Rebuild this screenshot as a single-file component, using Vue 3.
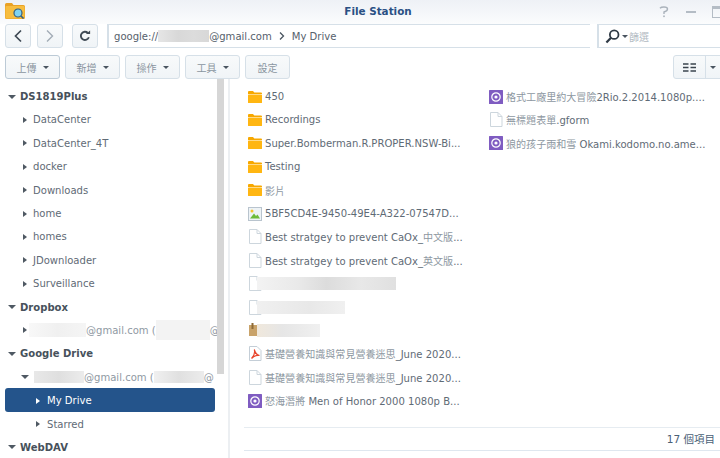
<script setup>
const tree = [
  { label: 'DS1819Plus', kind: 'head' },
  { label: 'DataCenter', kind: 'sub' },
  { label: 'DataCenter_4T', kind: 'sub' },
  { label: 'docker', kind: 'sub' },
  { label: 'Downloads', kind: 'sub' },
  { label: 'home', kind: 'sub' },
  { label: 'homes', kind: 'sub' },
  { label: 'JDownloader', kind: 'sub' },
  { label: 'Surveillance', kind: 'sub' },
  { label: 'Dropbox', kind: 'head' },
  { kind: 'acct', open: false },
  { label: 'Google Drive', kind: 'head' },
  { kind: 'acct', open: true },
  { label: 'My Drive', kind: 'drive', active: true },
  { label: 'Starred', kind: 'drive' },
  { label: 'WebDAV', kind: 'head' }
]
const col1 = [
  { icon: 'folder', name: '450' },
  { icon: 'folder', name: 'Recordings' },
  { icon: 'folder', name: 'Super.Bomberman.R.PROPER.NSW-Bi...' },
  { icon: 'folder', name: 'Testing' },
  { icon: 'folder', name: '影片' },
  { icon: 'image', name: '5BF5CD4E-9450-49E4-A322-07547D...' },
  { icon: 'file', name: 'Best stratgey to prevent CaOx_中文版...' },
  { icon: 'file', name: 'Best stratgey to prevent CaOx_英文版...' },
  { icon: 'file', blur: 'long' },
  { icon: 'file', blur: 'mid' },
  { icon: 'box', blur: 'short' },
  { icon: 'pdf', name: '基礎營養知識與常見營養迷思_June 2020...' },
  { icon: 'file', name: '基礎營養知識與常見營養迷思_June 2020...' },
  { icon: 'video', name: '怒海潛將 Men of Honor 2000 1080p B...' }
]
const col2 = [
  { icon: 'video', name: '格式工廠里約大冒險2Rio.2.2014.1080p....' },
  { icon: 'file', name: '無標題表單.gform' },
  { icon: 'video', name: '狼的孩子雨和雪 Okami.kodomo.no.ame...' }
]
const columns = [col1, col2]
const actions = ['上傳', '新增', '操作', '工具']
const parts = (s) => s.split(/([\u4e00-\u9fff]+)/).filter(Boolean).map((t) => ({ t, cjk: /[\u4e00-\u9fff]/.test(t) }))
</script>

<template>
  <div class="app">
    <header class="titlebar">
      <svg class="logo" viewBox="0 0 20 17" width="20" height="17">
        <path d="M0 2.5 Q0 1 1.5 1 H7 L8.5 3 H18.5 Q20 3 20 4.5 V15.5 Q20 17 18.5 17 H1.5 Q0 17 0 15.5 Z" fill="#e9a227" />
        <rect x="0.5" y="4" width="19" height="12.5" rx="1" fill="#f7bd3f" />
        <circle cx="13" cy="11" r="4" fill="#7fd3f2" stroke="#35607f" stroke-width="1.2" />
        <path d="M16 14 L18.5 16.5" stroke="#35607f" stroke-width="1.6" />
      </svg>
      <span class="title">File Station</span>
      <div class="winctl">
        <svg class="help" viewBox="0 0 10 12" width="10" height="12"><path d="M1 2.2 Q2 1 5 1 Q8.5 1 8.5 3 Q8.5 5 5 6 V8" fill="none" stroke="#aab2bb" stroke-width="1.4" /><rect x="4.2" y="9.5" width="1.6" height="1.6" fill="#aab2bb" /></svg>
        <span class="minim"></span>
        <span class="maxim"></span>
      </div>
    </header>

    <div class="navrow">
      <button class="btn square">
        <svg viewBox="0 0 10 14" width="10" height="14"><path d="M8 1.5 L2.5 7 L8 12.5" fill="none" stroke="#3f4a55" stroke-width="1.7" /></svg>
      </button>
      <button class="btn square">
        <svg viewBox="0 0 10 14" width="10" height="14"><path d="M2 1.5 L7.5 7 L2 12.5" fill="none" stroke="#a2acb6" stroke-width="1.4" /></svg>
      </button>
      <button class="btn square refresh">
        <svg viewBox="0 0 14 14" width="12" height="12"><path d="M11.5 8.5 A4.8 4.8 0 1 1 10.3 3.4" fill="none" stroke="#3f4a55" stroke-width="2.2" /><path d="M8 4.8 H13 V0.6 Z" fill="#3f4a55" /></svg>
      </button>
      <div class="path">
        <span>google://</span><span class="blur b-addr"></span><span>@gmail.com</span>
        <svg class="crumb" viewBox="0 0 6 10" width="6" height="10"><path d="M1 1.5 L4.5 5 L1 8.5" fill="none" stroke="#4a5560" stroke-width="1.3" /></svg>
        <span>My Drive</span>
      </div>
      <div class="search">
        <svg viewBox="0 0 16 16" width="15" height="15"><circle cx="9.8" cy="6" r="4.6" fill="none" stroke="#2f3a45" stroke-width="1.9" /><path d="M6.4 9.4 L1.5 14.5" stroke="#2f3a45" stroke-width="2.4" /></svg>
        <i class="caret dark"></i>
        <span class="ph">篩選</span>
      </div>
    </div>

    <div class="actionrow">
      <button v-for="(a, i) in actions" :key="a" class="btn action" :class="{ first: i === 0 }">{{ a }}<i class="caret dark"></i></button>
      <button class="btn action plain">設定</button>
      <div class="viewsw">
        <span class="vmain">
          <svg viewBox="0 0 13 9" width="13" height="9"><path d="M0 1 H5.5 M7.5 1 H13 M0 4.5 H5.5 M7.5 4.5 H13 M0 8 H5.5 M7.5 8 H13" stroke="#3a444e" stroke-width="1.5" /></svg>
        </span>
        <span class="vcaret"><i class="caret dark"></i></span>
      </div>
    </div>

    <div class="main">
      <aside class="side">
        <div class="scroll"></div>
        <div
          v-for="(n, i) in tree"
          :key="i"
          class="node"
          :class="[n.kind, { active: n.active }]"
        >
          <template v-if="n.kind === 'head'">
            <i class="tri down"></i><span>{{ n.label }}</span>
          </template>
          <template v-else-if="n.kind === 'acct'">
            <i class="tri" :class="n.open ? 'down small' : 'right tight'"></i>
            <span class="blur" :class="n.open ? 'b-a1' : 'b-d1'"></span><span class="mail">@gmail.com (</span><span class="blur" :class="n.open ? 'b-a2' : 'b-d2'"></span><span class="mail">@</span>
          </template>
          <template v-else>
            <i class="tri right"></i><span>{{ n.label }}</span>
          </template>
        </div>
      </aside>

      <section class="content">
        <div class="grid">
          <div v-for="(col, c) in columns" :key="c" class="col">
            <div v-for="(f, j) in col" :key="j" class="row">
              <span class="ico">
                <svg v-if="f.icon === 'folder'" viewBox="0 0 14 12" width="14" height="12">
                  <path d="M0 1 Q0 0 1 0 H5 L6.3 1.5 H13 Q14 1.5 14 2.5 V3 H0 Z" fill="#f7a800" />
                  <rect y="3.4" width="14" height="8.6" rx="0.6" fill="#ffb612" />
                </svg>
                <svg v-else-if="f.icon === 'file'" viewBox="0 0 14 15" width="14" height="15">
                  <path d="M1.5 0.5 H9 L13 4.5 V14.5 H1.5 Z M9 0.5 V4.5 H13" fill="#fff" stroke="#cdd6dd" />
                </svg>
                <svg v-else-if="f.icon === 'image'" viewBox="0 0 14 14" width="14" height="14">
                  <rect x="0.5" y="0.5" width="13" height="13" fill="#eef3f6" stroke="#b9c4ce" />
                  <circle cx="4" cy="4" r="1.5" fill="#f4c430" />
                  <path d="M2 11.5 L6 6.5 L8 9 L9.5 7.5 L12 11.5 Z" fill="#6dbb3a" />
                </svg>
                <svg v-else-if="f.icon === 'video'" viewBox="0 0 14 14" width="14" height="14">
                  <rect width="14" height="14" rx="0.5" fill="#7f5cc1" />
                  <circle cx="7" cy="7" r="4.2" fill="none" stroke="#fff" stroke-width="1.2" />
                  <circle cx="7" cy="7" r="1.6" fill="#fff" />
                </svg>
                <svg v-else-if="f.icon === 'pdf'" viewBox="0 0 14 15" width="14" height="15">
                  <path d="M1.5 0.5 H9 L13 4.5 V14.5 H1.5 Z" fill="#fff" stroke="#c4ced7" />
                  <path d="M3.5 12.5 C6 10 7 6 6.3 3.5 C7 6.5 9 9 11.5 9.5 C9 9 6 10 3.5 12.5 Z" fill="none" stroke="#e8452c" stroke-width="1.2" />
                </svg>
                <svg v-else viewBox="0 0 14 14" width="14" height="14">
                  <rect x="1" y="2" width="8" height="11" fill="#c9a36a" />
                  <rect x="3.5" y="0" width="2" height="6" fill="#8e6a35" />
                </svg>
              </span>
              <span v-if="f.name" class="fname"><span v-for="(p, k) in parts(f.name)" :key="k" :class="{ cjk: p.cjk }">{{ p.t }}</span></span>
              <span v-else class="blur fblur" :class="'f-' + f.blur"></span>
            </div>
          </div>
        </div>
        <footer class="status">17 個項目</footer>
      </section>
    </div>
  </div>
</template>

<style scoped>
.app {
  width: 720px;
  height: 458px;
  overflow: hidden;
  display: flex;
  flex-direction: column;
  background: #fff;
  font-family: "DejaVu Sans", "Noto Sans CJK TC", sans-serif;
  font-size: 10.05px;
  color: #5f6b76;
}
.titlebar {
  height: 24px;
  flex: none;
  position: relative;
  display: flex;
  align-items: center;
  justify-content: center;
  padding: 0 0 2px 36px;
  box-sizing: border-box;
  background: linear-gradient(#eef1f6, #fbfcfd);
}
.logo { position: absolute; left: 5px; top: 2px; }
.title { font-weight: 700; font-size: 10.4px; color: #2a5084; }
.winctl { position: absolute; right: 0; top: 0; height: 24px; display: flex; align-items: center; }
.help { margin-right: 17px; }
.minim { width: 10px; height: 2px; background: #b4bcc5; margin-right: 16px; }
.maxim { width: 10px; height: 8px; border: 1px solid #b4bcc5; border-top-width: 3px; margin-right: -4px; }
.navrow { height: 24px; flex: none; padding: 0 0 0 5px; display: flex; align-items: stretch; gap: 6px; }
.btn {
  font: inherit;
  color: #8a95a0;
  border: 1px solid #d6e0e8;
  border-radius: 3px;
  background: linear-gradient(#f8fafb, #f0f4f7);
  padding: 0;
  display: flex;
  align-items: center;
  justify-content: center;
}
.square { width: 26px; }
.refresh { margin-left: 3px; width: 26px; }
.path {
  width: 483px;
  margin-left: 3px;
  box-sizing: border-box;
  border: 1px solid #d6e0e8;
  border-right: 0;
  border-left-width: 2px;
  display: flex;
  align-items: center;
  padding-left: 5px;
  color: #56616c;
}
.crumb { margin: 0 7px 0 7px; }
.search {
  margin-left: 1px;
  flex: 1;
  border: 1px solid #d6e0e8;
  border-right: 0;
  border-left-width: 2px;
  display: flex;
  align-items: center;
  padding-left: 6px;
}
.ph { color: #b2bac2; margin-left: 1px; font-size: 10px; }
.actionrow { height: 24px; flex: none; margin-top: 7px; padding-left: 5px; display: flex; gap: 5px; }
.action { width: 55px; gap: 6px; }
.action.first { border-color: #bccad6; }
.action.plain { width: 45px; }
.caret {
  display: inline-block;
  width: 0;
  height: 0;
  border-left: 3px solid transparent;
  border-right: 3px solid transparent;
  border-top: 3px solid #66717c;
}
.caret.dark { border-top-color: #4a5560; }
.search .caret { margin-left: 2px; }
.viewsw {
  margin-left: auto;
  width: 46px;
  margin-right: -1px;
  display: flex;
  border: 1px solid #d6e0e8;
  border-radius: 3px 0 0 3px;
  background: linear-gradient(#f8fafb, #f0f4f7);
}
.vmain { width: 31px; display: flex; align-items: center; justify-content: center; border-right: 1px solid #d6e0e8; }
.vcaret { flex: 1; display: flex; align-items: center; justify-content: center; }
.main { flex: 1; display: flex; min-height: 0; }
.side {
  width: 230px;
  flex: none;
  position: relative;
  padding: 5.4px 0 0 5px;
  border-right: 2px solid #eceff2;
  box-sizing: border-box;
}
.scroll { position: absolute; left: 217px; top: 0; width: 7px; height: 295px; background: #d6d6d6; }
.node { width: 210px; height: 23.4px; display: flex; align-items: center; white-space: nowrap; box-sizing: border-box; border-radius: 3px; padding-top: 1px; }
.node.head { font-weight: 700; color: #47515b; padding-left: 3px; }
.node.sub { padding-left: 18px; }
.node.acct { padding-left: 16px; }
.node.drive { padding-left: 31px; }
.node.active { background: #24548b; color: #fff; }
.mail { color: #8f99a3; }
.tri { display: inline-block; flex: none; width: 0; height: 0; }
.tri.down { border-left: 4px solid transparent; border-right: 4px solid transparent; border-top: 4px solid #4f5963; margin-right: 4px; }
.tri.down.small { margin-right: 5px; }
.tri.right { border-top: 3.5px solid transparent; border-bottom: 3.5px solid transparent; border-left: 4px solid #4f5963; margin-right: 6px; }
.tri.right.tight { margin: 0 2px 0 2px; }
.node.active .tri.right { border-left-color: #fff; }
.node.drive .tri.right { margin-right: 7px; }
.blur { display: inline-block; flex: none; }
.b-addr { width: 51px; height: 12px; background: linear-gradient(90deg, #e6e6e6, #d8d8d8 40%, #dcdcdc 70%, #d8d8d8); }
.b-d1 { width: 57px; height: 14px; background: linear-gradient(90deg, #f8f8f8, #f0f0f0 50%, #f5f5f5); }
.b-d2 { width: 54px; height: 20px; background: #f3f3f3; }
.b-a1 { width: 50px; height: 12px; background: linear-gradient(90deg, #e8e8e8, #dfdfdf 50%, #ececec); }
.b-a2 { width: 50px; height: 12px; background: linear-gradient(90deg, #f0f0f0, #e0e0e0 50%, #ececec); }
.content { flex: 1; display: flex; flex-direction: column; min-width: 0; }
.grid { flex: 1; display: flex; padding: 5.4px 0 0 18px; }
.col { width: 241px; flex: none; }
.row { height: 23.4px; display: flex; align-items: center; white-space: nowrap; box-sizing: border-box; padding-top: 1px; }
.ico { width: 17px; flex: none; display: flex; align-items: center; }
.fname { color: #5f6b76; }
.cjk { color: #8d97a1; }
.fblur { height: 13px; margin-left: -8px; }
.f-long { width: 139px; background: linear-gradient(90deg, #f3f3f3, #e9e9e9 30%, #dcdcdc 50%, #e8e8e8 75%, #e0e0e0); }
.f-mid { width: 88px; background: linear-gradient(90deg, #f0f0f0, #e8e8e8 60%, #f0f0f0); }
.f-short { width: 63px; background: linear-gradient(90deg, #f0e8dc, #e6e6e6 40%, #f0f0f0); }
.status {
  height: 24px;
  margin: 0 0 7px 14px;
  box-sizing: border-box;
  border-top: 1px solid #e6ecf1;
  border-bottom: 1px solid #dfe7ef;
  text-align: right;
  font-size: 10.5px;
  line-height: 22px;
  padding-right: 5px;
  color: #4a6076;
}
</style>

<style>
html, body { margin: 0; background: #fff; }
</style>
